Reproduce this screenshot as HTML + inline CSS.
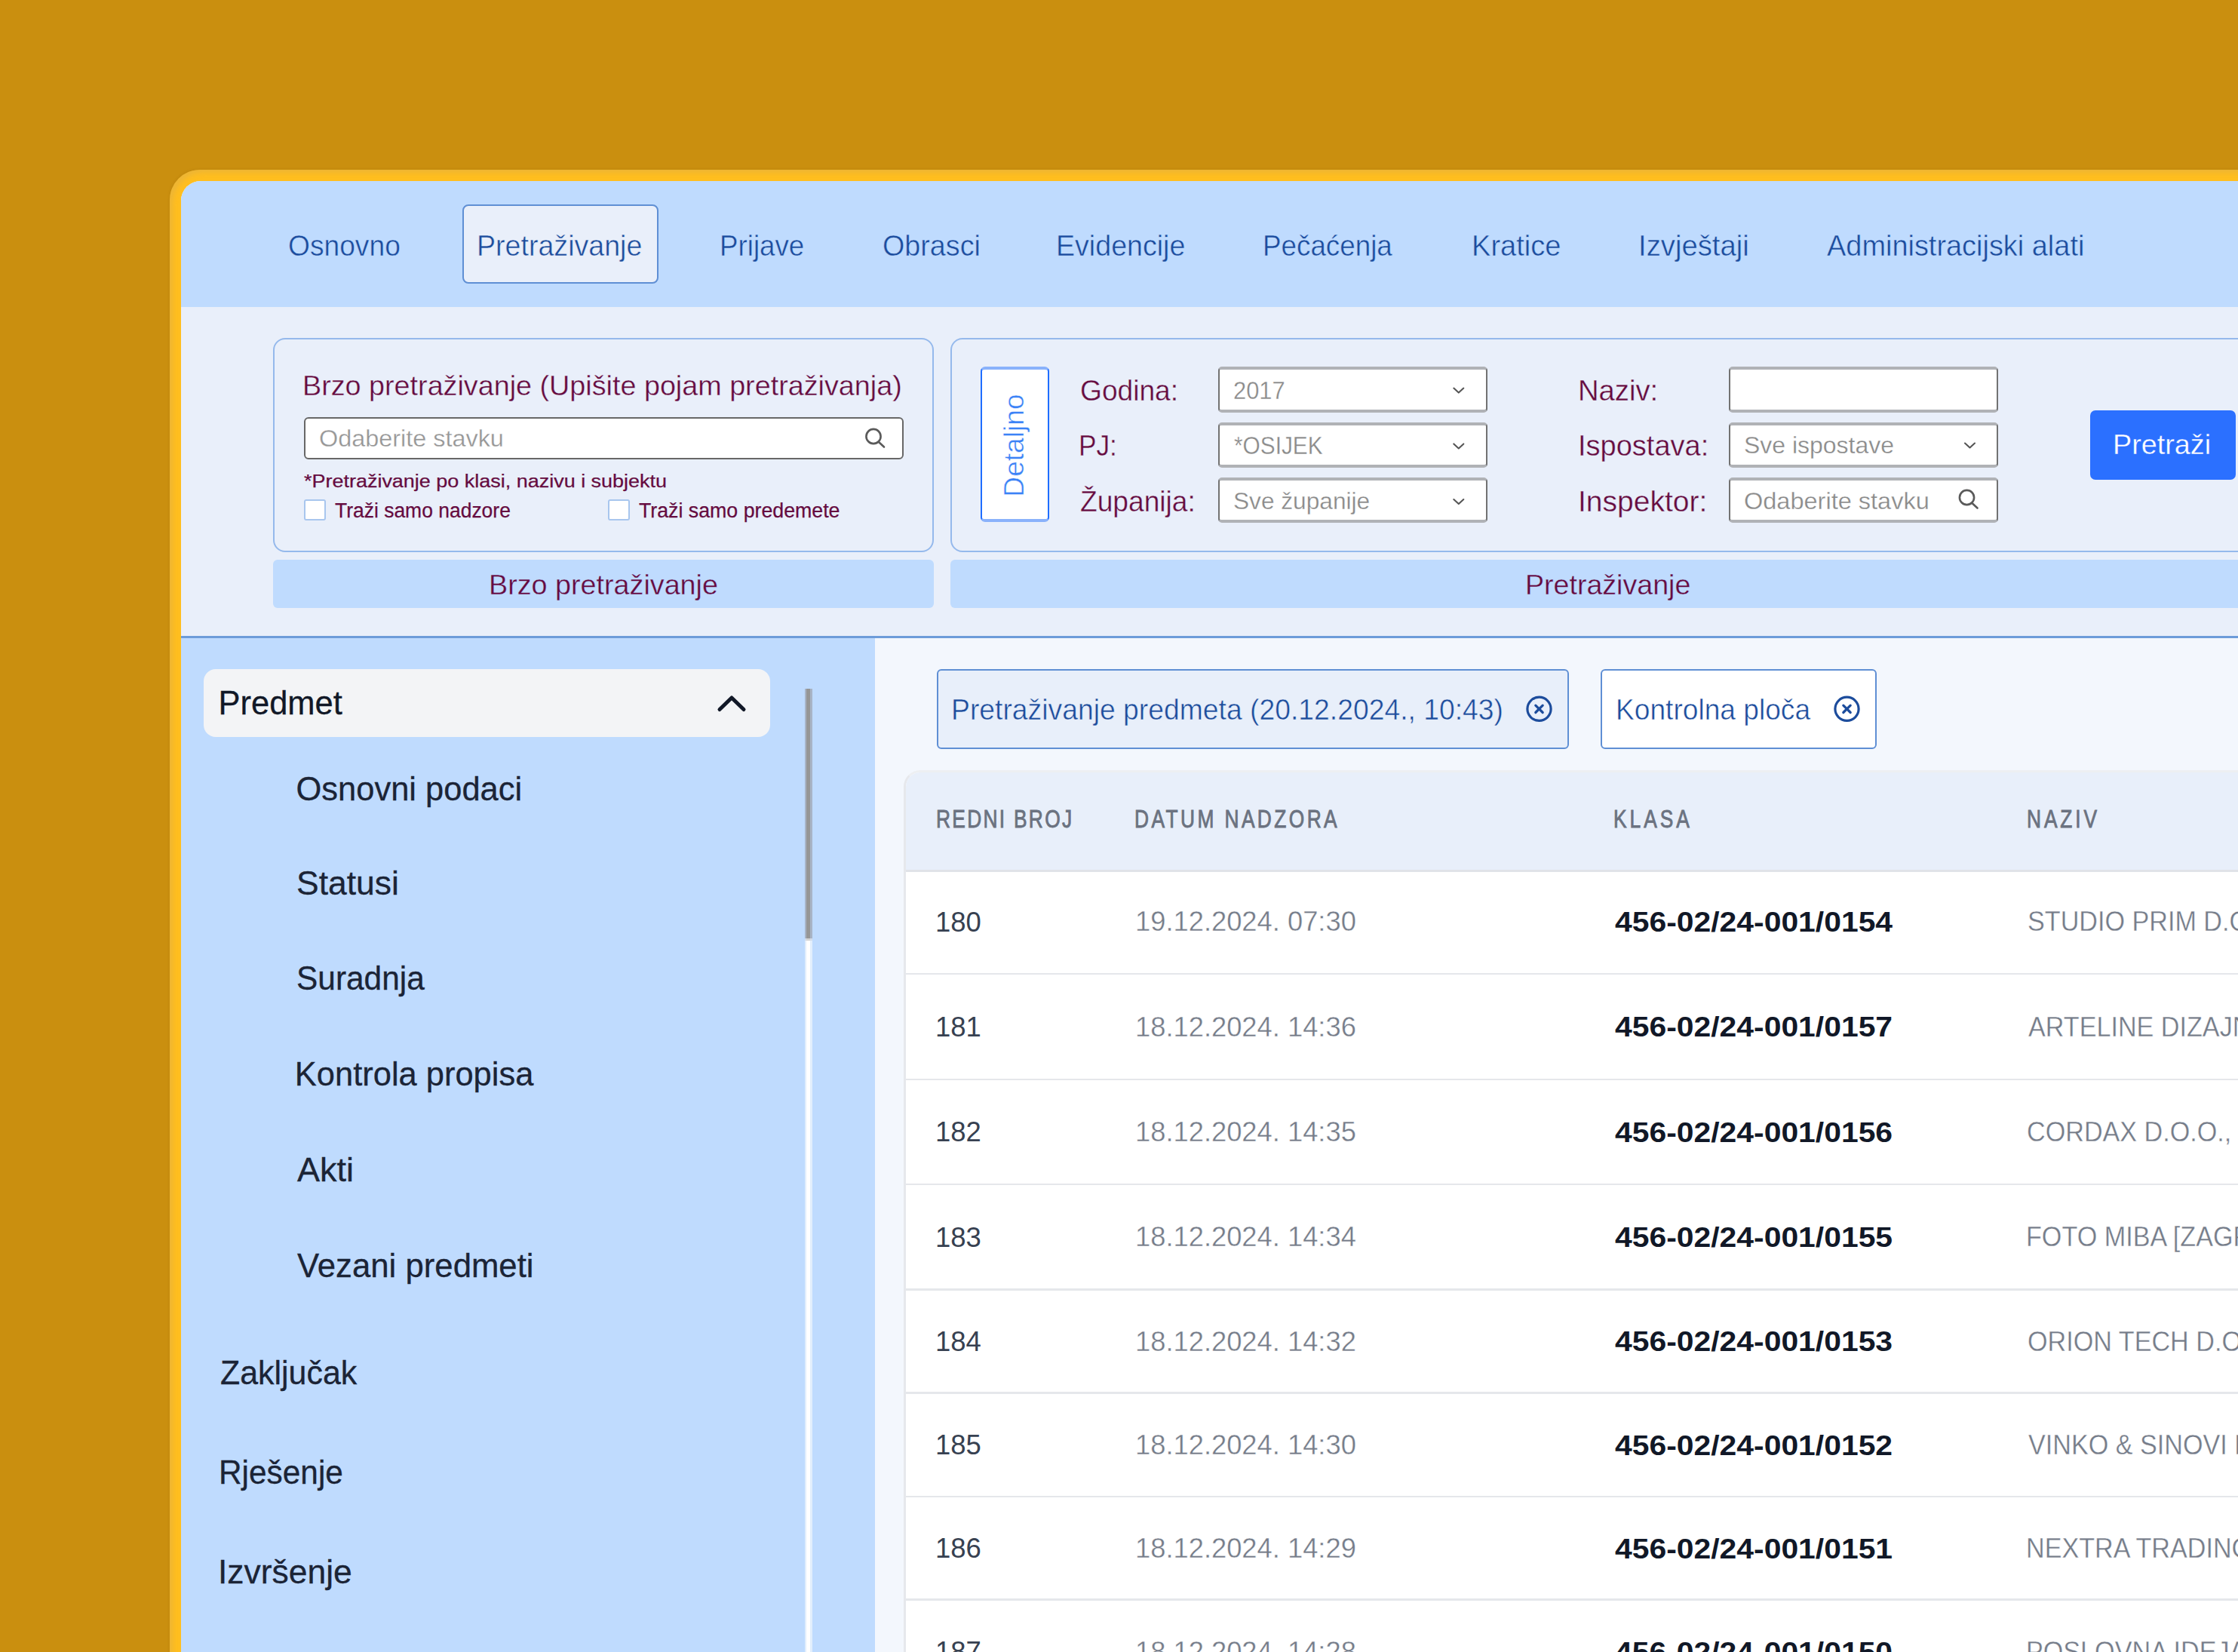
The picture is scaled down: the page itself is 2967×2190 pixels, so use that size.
<!DOCTYPE html>
<html><head><meta charset="utf-8"><style>
html,body{margin:0;padding:0;}
body{width:2967px;height:2190px;overflow:hidden;position:relative;background:#ca8f0f;font-family:"Liberation Sans",sans-serif;}
.a{position:absolute;box-sizing:border-box;}
.t{position:absolute;white-space:nowrap;font-family:"Liberation Sans",sans-serif;}
svg{position:absolute;overflow:visible;}

</style></head><body>
<div class="a" style="left:225px;top:225px;width:2800px;height:2000px;background:#ffbe1f;border-top-left-radius:40px;box-shadow:-1px -1px 3px rgba(120,80,0,0.10), inset 5px 5px 6px -1px rgba(215,170,80,0.45);"></div>
<div class="a" style="left:240px;top:240px;width:2760px;height:1990px;border-top-left-radius:26px;overflow:hidden;background:#f3f7fd;">
  <div class="a" style="left:0;top:0;width:2760px;height:167px;background:#bfdbfe;"></div>
  <div class="a" style="left:0;top:167px;width:2760px;height:437px;background:#e9effa;"></div>
  <div class="a" style="left:0;top:603px;width:2760px;height:3px;background:#6d9cd9;"></div>
  <div class="a" style="left:0;top:606px;width:920px;height:1400px;background:#bfdbfe;"></div>
</div>
<!-- active nav tab -->
<div class="a" style="left:613px;top:271px;width:260px;height:105px;border:2.4px solid #5f8fd4;border-radius:8px;background:#e9effa;"></div>
<!-- panel 1 -->
<div class="a" style="left:362px;top:448px;width:876px;height:284px;border:2.4px solid #95b9ec;border-radius:16px;"></div>
<div class="a" style="left:403px;top:553px;width:795px;height:56px;border:2.5px solid #676767;border-radius:6px;background:#fff;"></div>
<svg style="left:0;top:0" width="1" height="1"><g fill="none" stroke="#5a5a5a" stroke-width="2.6" stroke-linecap="round"><circle cx="1158" cy="578.5" r="9.6"/><line x1="1165" y1="586" x2="1172" y2="592.5"/></g></svg>
<div class="a" style="left:403px;top:662px;width:29px;height:28px;border:2px solid #a8c6ee;border-radius:3px;background:#fff;"></div>
<div class="a" style="left:806px;top:662px;width:29px;height:28px;border:2px solid #a8c6ee;border-radius:3px;background:#fff;"></div>
<div class="a" style="left:362px;top:742px;width:876px;height:63.5px;background:#bfdbfe;border-radius:6px;"></div>
<!-- panel 2 -->
<div class="a" style="left:1259.5px;top:448px;width:1800px;height:284px;border:2.4px solid #95b9ec;border-radius:16px;"></div>
<div class="a" style="left:1260px;top:742px;width:1800px;height:63.5px;background:#bfdbfe;border-radius:6px;"></div>
<div class="a" style="left:1300px;top:486px;width:91px;height:206px;border:2.5px solid #1f6dff;border-top:4.5px solid #8ab2fb;border-bottom:4.5px solid #8ab2fb;border-radius:6px;background:#fff;"></div>
<!-- selects -->

<div class="a" style="left:1614.5px;top:486px;width:357px;height:61px;border:2.5px solid #727272;border-top:4.6px solid #b0b2b6;border-bottom:4.6px solid #b0b2b6;border-radius:5px;background:#fff;"></div>
<div class="a" style="left:2292px;top:486px;width:357px;height:61px;border:2.5px solid #727272;border-top:4.6px solid #b0b2b6;border-bottom:4.6px solid #b0b2b6;border-radius:5px;background:#fff;"></div>
<div class="a" style="left:1614.5px;top:560px;width:357px;height:60px;border:2.5px solid #727272;border-top:4.6px solid #b0b2b6;border-bottom:4.6px solid #b0b2b6;border-radius:5px;background:#fff;"></div>
<div class="a" style="left:2292px;top:560px;width:357px;height:60px;border:2.5px solid #727272;border-top:4.6px solid #b0b2b6;border-bottom:4.6px solid #b0b2b6;border-radius:5px;background:#fff;"></div>
<div class="a" style="left:1614.5px;top:633.4px;width:357px;height:60.0px;border:2.5px solid #727272;border-top:4.6px solid #b0b2b6;border-bottom:4.6px solid #b0b2b6;border-radius:5px;background:#fff;"></div>
<div class="a" style="left:2292px;top:633.4px;width:357px;height:60.0px;border:2.5px solid #727272;border-top:4.6px solid #b0b2b6;border-bottom:4.6px solid #b0b2b6;border-radius:5px;background:#fff;"></div>
<svg style="left:0;top:0" width="1" height="1"><g fill="none" stroke="#555" stroke-width="2.1" stroke-linecap="round" stroke-linejoin="round">
<polyline points="1927.3,514.6 1933.8,520.6 1940.3,514.6"/>
<polyline points="1927.3,588.4 1933.8,594.4 1940.3,588.4"/>
<polyline points="1927.3,662 1933.8,668 1940.3,662"/>
<polyline points="2605,587.5 2611.5,593.5 2618,587.5"/>
</g>
<g fill="none" stroke="#5a5a5a" stroke-width="2.6" stroke-linecap="round"><circle cx="2607.5" cy="659.5" r="9.6"/><line x1="2614.5" y1="667" x2="2621.5" y2="673.5"/></g>
</svg>
<div class="a" style="left:2771px;top:544px;width:193px;height:92px;background:#2b70ff;border-radius:7px;"></div>
<!-- sidebar -->
<div class="a" style="left:270px;top:887px;width:751px;height:90px;background:#f3f4f6;border-radius:16px;"></div>
<svg style="left:0;top:0" width="1" height="1"><polyline points="954,940.5 970,925 986,940.5" fill="none" stroke="#111827" stroke-width="5" stroke-linecap="round" stroke-linejoin="round"/></svg>
<div class="a" style="left:1067px;top:912.5px;width:9.5px;height:331.5px;background:linear-gradient(to right,#a8b4c6 0,#a8b4c6 2px,#969696 2px,#969696 7px,#a8b4c6 7px);"></div>
<div class="a" style="left:1067px;top:1244px;width:9.5px;height:3px;background:linear-gradient(to right,#d2dcea 0,#d2dcea 2px,#d4d4d4 2px,#d4d4d4 7px,#d2dcea 7px);"></div>
<div class="a" style="left:1067px;top:1247px;width:9.5px;height:950px;background:linear-gradient(to right,#e2eefc 0,#e2eefc 2px,#ffffff 2px,#ffffff 7px,#e2eefc 7px);"></div>
<!-- tabs -->
<div class="a" style="left:1242px;top:887px;width:838px;height:106px;border:2.4px solid #5f8fd4;border-radius:6px;background:#e8effa;"></div>
<div class="a" style="left:2122px;top:887px;width:366px;height:106px;border:2.4px solid #5f8fd4;border-radius:6px;background:#ffffff;"></div>
<svg style="left:0;top:0" width="1" height="1"><g fill="none" stroke="#1c4c9c" stroke-width="3.2" stroke-linecap="round">
<circle cx="2040.5" cy="939.8" r="15.6"/><line x1="2035.8" y1="935.1" x2="2045.2" y2="944.5"/><line x1="2045.2" y1="935.1" x2="2035.8" y2="944.5"/>
<circle cx="2448.5" cy="939.8" r="15.6"/><line x1="2443.8" y1="935.1" x2="2453.2" y2="944.5"/><line x1="2453.2" y1="935.1" x2="2443.8" y2="944.5"/>
</g></svg>
<!-- table card -->
<div class="a" style="left:1197.5px;top:1021px;width:1900px;height:1300px;border:3px solid #e6e8ec;border-top-color:#edeff2;border-radius:22px;background:#fff;overflow:hidden;">
  <div class="a" style="left:0;top:0;width:1900px;height:129px;background:#e8effa;"></div>
  <div class="a" style="left:0;top:129px;width:1900px;height:2.5px;background:#e0e3e8;"></div>
</div>
<div class="a" style="left:1201px;top:1290.0px;width:1800px;height:2.4px;background:#e5e7eb;"></div>
<div class="a" style="left:1201px;top:1429.8px;width:1800px;height:2.4px;background:#e5e7eb;"></div>
<div class="a" style="left:1201px;top:1568.8px;width:1800px;height:2.4px;background:#e5e7eb;"></div>
<div class="a" style="left:1201px;top:1708.3px;width:1800px;height:2.4px;background:#e5e7eb;"></div>
<div class="a" style="left:1201px;top:1845.4px;width:1800px;height:2.4px;background:#e5e7eb;"></div>
<div class="a" style="left:1201px;top:1982.8px;width:1800px;height:2.4px;background:#e5e7eb;"></div>
<div class="a" style="left:1201px;top:2119.3px;width:1800px;height:2.4px;background:#e5e7eb;"></div>

<div class="t" style="left:381.51px;top:305.80px;font-size:39.57px;line-height:39.57px;color:#1c4c9c;transform-origin:0 33.50px;transform:scaleX(0.9398);-webkit-text-stroke:0.5px #bfdbfe;">Osnovno</div>
<div class="t" style="left:631.99px;top:305.80px;font-size:39.57px;line-height:39.57px;color:#1c4c9c;transform-origin:0 33.50px;transform:scaleX(0.9500);-webkit-text-stroke:0.5px #e9effa;">Pretraživanje</div>
<div class="t" style="left:954.06px;top:305.80px;font-size:39.57px;line-height:39.57px;color:#1c4c9c;transform-origin:0 33.50px;transform:scaleX(0.9283);-webkit-text-stroke:0.5px #bfdbfe;">Prijave</div>
<div class="t" style="left:1170.49px;top:305.80px;font-size:39.57px;line-height:39.57px;color:#1c4c9c;transform-origin:0 33.50px;transform:scaleX(0.9526);-webkit-text-stroke:0.5px #bfdbfe;">Obrasci</div>
<div class="t" style="left:1399.99px;top:305.80px;font-size:39.57px;line-height:39.57px;color:#1c4c9c;transform-origin:0 33.50px;transform:scaleX(0.9502);-webkit-text-stroke:0.5px #bfdbfe;">Evidencije</div>
<div class="t" style="left:1674.06px;top:305.80px;font-size:39.57px;line-height:39.57px;color:#1c4c9c;transform-origin:0 33.50px;transform:scaleX(0.9298);-webkit-text-stroke:0.5px #bfdbfe;">Pečaćenja</div>
<div class="t" style="left:1950.96px;top:305.80px;font-size:39.57px;line-height:39.57px;color:#1c4c9c;transform-origin:0 33.50px;transform:scaleX(0.9617);-webkit-text-stroke:0.5px #bfdbfe;">Kratice</div>
<div class="t" style="left:2171.55px;top:305.80px;font-size:39.57px;line-height:39.57px;color:#1c4c9c;transform-origin:0 33.50px;transform:scaleX(0.9678);-webkit-text-stroke:0.5px #bfdbfe;">Izvještaji</div>
<div class="t" style="left:2422.00px;top:305.80px;font-size:39.57px;line-height:39.57px;color:#1c4c9c;transform-origin:0 33.50px;transform:scaleX(0.9584);-webkit-text-stroke:0.5px #bfdbfe;">Administracijski alati</div>
<div class="t" style="left:400.98px;top:493.63px;font-size:36.81px;line-height:36.81px;color:#650b3f;transform-origin:0 31.17px;transform:scaleX(1.0253);-webkit-text-stroke:0.35px #e9effa;">Brzo pretraživanje (Upišite pojam pretraživanja)</div>
<div class="t" style="left:423.20px;top:567.16px;font-size:30.87px;line-height:30.87px;color:#969696;transform-origin:0 26.14px;transform:scaleX(1.0496);-webkit-text-stroke:0.3px #ffffff;">Odaberite stavku</div>
<div class="t" style="left:403.33px;top:626.18px;font-size:23.77px;line-height:23.77px;color:#650b3f;transform-origin:0 20.12px;transform:scaleX(1.1344);-webkit-text-stroke:0.25px #650b3f;">*Pretraživanje po klasi, nazivu i subjektu</div>
<div class="t" style="left:443.97px;top:664.10px;font-size:26.81px;line-height:26.81px;color:#650b3f;transform-origin:0 22.70px;transform:scaleX(0.9875);-webkit-text-stroke:0.25px #650b3f;">Traži samo nadzore</div>
<div class="t" style="left:847.17px;top:664.10px;font-size:26.81px;line-height:26.81px;color:#650b3f;transform-origin:0 22.70px;transform:scaleX(0.9977);-webkit-text-stroke:0.25px #650b3f;">Traži samo predemete</div>
<div class="t" style="left:647.68px;top:757.51px;font-size:36.96px;line-height:36.96px;color:#650b3f;transform-origin:0 31.29px;transform:scaleX(1.0206);-webkit-text-stroke:0.35px #bfdbfe;">Brzo pretraživanje</div>
<div class="t" style="left:1431.64px;top:499.21px;font-size:38.84px;line-height:38.84px;color:#650b3f;transform-origin:0 32.89px;transform:scaleX(0.9565);-webkit-text-stroke:0.35px #e9effa;">Godina:</div>
<div class="t" style="left:1430.18px;top:571.91px;font-size:38.84px;line-height:38.84px;color:#650b3f;transform-origin:0 32.89px;transform:scaleX(0.9073);-webkit-text-stroke:0.35px #e9effa;">PJ:</div>
<div class="t" style="left:1432.39px;top:646.11px;font-size:38.84px;line-height:38.84px;color:#650b3f;transform-origin:0 32.89px;transform:scaleX(0.9568);-webkit-text-stroke:0.35px #e9effa;">Županija:</div>
<div class="t" style="left:1635.46px;top:501.57px;font-size:32.75px;line-height:32.75px;color:#8a8a8a;transform-origin:0 27.73px;transform:scaleX(0.9424);-webkit-text-stroke:0.3px #ffffff;">2017</div>
<div class="t" style="left:1636.30px;top:575.44px;font-size:32.32px;line-height:32.32px;color:#8a8a8a;transform-origin:0 27.36px;transform:scaleX(0.9222);-webkit-text-stroke:0.3px #ffffff;">*OSIJEK</div>
<div class="t" style="left:1635.33px;top:649.30px;font-size:31.88px;line-height:31.88px;color:#8a8a8a;transform-origin:0 27.00px;transform:scaleX(0.9925);-webkit-text-stroke:0.3px #ffffff;">Sve županije</div>
<div class="t" style="left:2092.44px;top:498.91px;font-size:38.84px;line-height:38.84px;color:#650b3f;transform-origin:0 32.89px;transform:scaleX(0.9843);-webkit-text-stroke:0.35px #e9effa;">Naziv:</div>
<div class="t" style="left:2092.08px;top:571.91px;font-size:38.84px;line-height:38.84px;color:#650b3f;transform-origin:0 32.89px;transform:scaleX(0.9786);-webkit-text-stroke:0.35px #e9effa;">Ispostava:</div>
<div class="t" style="left:2091.99px;top:645.91px;font-size:38.84px;line-height:38.84px;color:#650b3f;transform-origin:0 32.89px;transform:scaleX(1.0052);-webkit-text-stroke:0.35px #e9effa;">Inspektor:</div>
<div class="t" style="left:2312.02px;top:575.45px;font-size:31.59px;line-height:31.59px;color:#8a8a8a;transform-origin:0 26.75px;transform:scaleX(1.0119);-webkit-text-stroke:0.3px #ffffff;">Sve ispostave</div>
<div class="t" style="left:2312.00px;top:649.05px;font-size:31.59px;line-height:31.59px;color:#8a8a8a;transform-origin:0 26.75px;transform:scaleX(1.0294);-webkit-text-stroke:0.3px #ffffff;">Odaberite stavku</div>
<div class="t" style="left:2800.98px;top:572.25px;font-size:36.67px;line-height:36.67px;color:#ffffff;transform-origin:0 31.05px;transform:scaleX(1.0296);-webkit-text-stroke:0.3px #2b70ff;">Pretraži</div>
<div class="t" style="left:2021.99px;top:757.55px;font-size:36.67px;line-height:36.67px;color:#650b3f;transform-origin:0 31.05px;transform:scaleX(1.0251);-webkit-text-stroke:0.35px #bfdbfe;">Pretraživanje</div>
<div class="t" style="left:1358.00px;top:628.09px;font-size:36.23px;line-height:36.23px;color:#3b82f6;transform-origin:0 30.68px;transform:rotate(-90deg) scaleX(1.0254);-webkit-text-stroke:0.5px #ffffff;">Detaljno</div>
<div class="t" style="left:289.52px;top:911.49px;font-size:43.48px;line-height:43.48px;color:#111827;-webkit-text-stroke:0.3px #111827;">Predmet</div>
<div class="t" style="left:392.56px;top:1025.19px;font-size:43.48px;line-height:43.48px;color:#1b2436;-webkit-text-stroke:0.3px #1b2436;">Osnovni podaci</div>
<div class="t" style="left:392.52px;top:1149.59px;font-size:43.48px;line-height:43.48px;color:#1b2436;transform-origin:0 36.81px;transform:scaleX(1.0220);-webkit-text-stroke:0.3px #1b2436;">Statusi</div>
<div class="t" style="left:392.60px;top:1276.39px;font-size:43.48px;line-height:43.48px;color:#1b2436;transform-origin:0 36.81px;transform:scaleX(0.9758);-webkit-text-stroke:0.3px #1b2436;">Suradnja</div>
<div class="t" style="left:390.82px;top:1403.29px;font-size:43.48px;line-height:43.48px;color:#1b2436;-webkit-text-stroke:0.3px #1b2436;">Kontrola propisa</div>
<div class="t" style="left:394.30px;top:1529.79px;font-size:43.48px;line-height:43.48px;color:#1b2436;transform-origin:0 36.81px;transform:scaleX(1.0362);-webkit-text-stroke:0.3px #1b2436;">Akti</div>
<div class="t" style="left:394.30px;top:1656.59px;font-size:43.48px;line-height:43.48px;color:#1b2436;transform-origin:0 36.81px;transform:scaleX(1.0059);-webkit-text-stroke:0.3px #1b2436;">Vezani predmeti</div>
<div class="t" style="left:291.71px;top:1798.79px;font-size:43.48px;line-height:43.48px;color:#1b2436;transform-origin:0 36.81px;transform:scaleX(0.9871);-webkit-text-stroke:0.3px #1b2436;">Zaključak</div>
<div class="t" style="left:289.61px;top:1930.79px;font-size:43.48px;line-height:43.48px;color:#1b2436;transform-origin:0 36.81px;transform:scaleX(0.9748);-webkit-text-stroke:0.3px #1b2436;">Rješenje</div>
<div class="t" style="left:289.00px;top:2062.79px;font-size:43.48px;line-height:43.48px;color:#1b2436;transform-origin:0 36.81px;transform:scaleX(1.0220);-webkit-text-stroke:0.3px #1b2436;">Izvršenje</div>
<div class="t" style="left:1261.22px;top:922.24px;font-size:38.70px;line-height:38.70px;color:#1c4c9c;transform-origin:0 32.76px;transform:scaleX(0.9642);-webkit-text-stroke:0.5px #e8effa;">Pretraživanje predmeta (20.12.2024., 10:43)</div>
<div class="t" style="left:2142.03px;top:922.21px;font-size:38.84px;line-height:38.84px;color:#1c4c9c;transform-origin:0 32.89px;transform:scaleX(0.9563);-webkit-text-stroke:0.5px #ffffff;">Kontrolna ploča</div>
<div class="t" style="left:1241.39px;top:1070.14px;font-size:32.90px;line-height:32.90px;color:#6b7280;letter-spacing:2.883px;transform-origin:0 27.86px;transform:scaleX(0.8000);-webkit-text-stroke:0.9px #6b7280;">REDNI BROJ</div>
<div class="t" style="left:1503.89px;top:1070.14px;font-size:32.90px;line-height:32.90px;color:#6b7280;letter-spacing:4.284px;transform-origin:0 27.86px;transform:scaleX(0.8000);-webkit-text-stroke:0.9px #6b7280;">DATUM NADZORA</div>
<div class="t" style="left:2138.59px;top:1070.14px;font-size:32.90px;line-height:32.90px;color:#6b7280;letter-spacing:4.991px;transform-origin:0 27.86px;transform:scaleX(0.8000);-webkit-text-stroke:0.9px #6b7280;">KLASA</div>
<div class="t" style="left:2686.89px;top:1070.14px;font-size:32.90px;line-height:32.90px;color:#6b7280;letter-spacing:4.851px;transform-origin:0 27.86px;transform:scaleX(0.8000);-webkit-text-stroke:0.9px #6b7280;">NAZIV</div>
<div class="t" style="left:1240.45px;top:1203.50px;font-size:37.68px;line-height:37.68px;color:#374151;transform-origin:0 31.90px;transform:scaleX(0.9682);">180</div>
<div class="t" style="left:1505.46px;top:1204.11px;font-size:36.96px;line-height:36.96px;color:#757c89;transform-origin:0 31.29px;transform:scaleX(0.9828);-webkit-text-stroke:0.35px #ffffff;">19.12.2024. 07:30</div>
<div class="t" style="left:2140.59px;top:1203.95px;font-size:37.14px;line-height:37.14px;color:#111827;font-weight:700;transform-origin:0 31.45px;transform:scaleX(1.1007);">456-02/24-001/0154</div>
<div class="t" style="left:2687.63px;top:1204.23px;font-size:36.81px;line-height:36.81px;color:#757c89;transform-origin:0 31.17px;transform:scaleX(0.9280);-webkit-text-stroke:0.35px #ffffff;">STUDIO PRIM D.O.O.</div>
<div class="t" style="left:1240.45px;top:1343.00px;font-size:37.68px;line-height:37.68px;color:#374151;transform-origin:0 31.90px;transform:scaleX(0.9682);">181</div>
<div class="t" style="left:1505.46px;top:1343.61px;font-size:36.96px;line-height:36.96px;color:#757c89;transform-origin:0 31.29px;transform:scaleX(0.9828);-webkit-text-stroke:0.35px #ffffff;">18.12.2024. 14:36</div>
<div class="t" style="left:2140.59px;top:1343.45px;font-size:37.14px;line-height:37.14px;color:#111827;font-weight:700;transform-origin:0 31.45px;transform:scaleX(1.1007);">456-02/24-001/0157</div>
<div class="t" style="left:2689.00px;top:1343.73px;font-size:36.81px;line-height:36.81px;color:#757c89;transform-origin:0 31.17px;transform:scaleX(0.9280);-webkit-text-stroke:0.35px #ffffff;">ARTELINE DIZAJN</div>
<div class="t" style="left:1240.45px;top:1482.40px;font-size:37.68px;line-height:37.68px;color:#374151;transform-origin:0 31.90px;transform:scaleX(0.9682);">182</div>
<div class="t" style="left:1505.46px;top:1483.01px;font-size:36.96px;line-height:36.96px;color:#757c89;transform-origin:0 31.29px;transform:scaleX(0.9828);-webkit-text-stroke:0.35px #ffffff;">18.12.2024. 14:35</div>
<div class="t" style="left:2140.59px;top:1482.85px;font-size:37.14px;line-height:37.14px;color:#111827;font-weight:700;transform-origin:0 31.45px;transform:scaleX(1.1007);">456-02/24-001/0156</div>
<div class="t" style="left:2687.29px;top:1483.13px;font-size:36.81px;line-height:36.81px;color:#757c89;transform-origin:0 31.17px;transform:scaleX(0.9280);-webkit-text-stroke:0.35px #ffffff;">CORDAX D.O.O., ZAGREB</div>
<div class="t" style="left:1240.45px;top:1621.65px;font-size:37.68px;line-height:37.68px;color:#374151;transform-origin:0 31.90px;transform:scaleX(0.9682);">183</div>
<div class="t" style="left:1505.46px;top:1622.26px;font-size:36.96px;line-height:36.96px;color:#757c89;transform-origin:0 31.29px;transform:scaleX(0.9828);-webkit-text-stroke:0.35px #ffffff;">18.12.2024. 14:34</div>
<div class="t" style="left:2140.59px;top:1622.10px;font-size:37.14px;line-height:37.14px;color:#111827;font-weight:700;transform-origin:0 31.45px;transform:scaleX(1.1007);">456-02/24-001/0155</div>
<div class="t" style="left:2686.27px;top:1622.38px;font-size:36.81px;line-height:36.81px;color:#757c89;transform-origin:0 31.17px;transform:scaleX(0.9280);-webkit-text-stroke:0.35px #ffffff;">FOTO MIBA [ZAGREB]</div>
<div class="t" style="left:1240.45px;top:1759.95px;font-size:37.68px;line-height:37.68px;color:#374151;transform-origin:0 31.90px;transform:scaleX(0.9682);">184</div>
<div class="t" style="left:1505.46px;top:1760.56px;font-size:36.96px;line-height:36.96px;color:#757c89;transform-origin:0 31.29px;transform:scaleX(0.9828);-webkit-text-stroke:0.35px #ffffff;">18.12.2024. 14:32</div>
<div class="t" style="left:2140.59px;top:1760.40px;font-size:37.14px;line-height:37.14px;color:#111827;font-weight:700;transform-origin:0 31.45px;transform:scaleX(1.1007);">456-02/24-001/0153</div>
<div class="t" style="left:2687.63px;top:1760.68px;font-size:36.81px;line-height:36.81px;color:#757c89;transform-origin:0 31.17px;transform:scaleX(0.9280);-webkit-text-stroke:0.35px #ffffff;">ORION TECH D.O.O.</div>
<div class="t" style="left:1240.45px;top:1897.20px;font-size:37.68px;line-height:37.68px;color:#374151;transform-origin:0 31.90px;transform:scaleX(0.9682);">185</div>
<div class="t" style="left:1505.46px;top:1897.81px;font-size:36.96px;line-height:36.96px;color:#757c89;transform-origin:0 31.29px;transform:scaleX(0.9828);-webkit-text-stroke:0.35px #ffffff;">18.12.2024. 14:30</div>
<div class="t" style="left:2140.59px;top:1897.65px;font-size:37.14px;line-height:37.14px;color:#111827;font-weight:700;transform-origin:0 31.45px;transform:scaleX(1.1007);">456-02/24-001/0152</div>
<div class="t" style="left:2689.00px;top:1897.93px;font-size:36.81px;line-height:36.81px;color:#757c89;transform-origin:0 31.17px;transform:scaleX(0.9280);-webkit-text-stroke:0.35px #ffffff;">VINKO &amp; SINOVI D.O.O.</div>
<div class="t" style="left:1240.45px;top:2034.15px;font-size:37.68px;line-height:37.68px;color:#374151;transform-origin:0 31.90px;transform:scaleX(0.9682);">186</div>
<div class="t" style="left:1505.46px;top:2034.76px;font-size:36.96px;line-height:36.96px;color:#757c89;transform-origin:0 31.29px;transform:scaleX(0.9828);-webkit-text-stroke:0.35px #ffffff;">18.12.2024. 14:29</div>
<div class="t" style="left:2140.59px;top:2034.60px;font-size:37.14px;line-height:37.14px;color:#111827;font-weight:700;transform-origin:0 31.45px;transform:scaleX(1.1007);">456-02/24-001/0151</div>
<div class="t" style="left:2686.27px;top:2034.88px;font-size:36.81px;line-height:36.81px;color:#757c89;transform-origin:0 31.17px;transform:scaleX(0.9280);-webkit-text-stroke:0.35px #ffffff;">NEXTRA TRADING</div>
<div class="t" style="left:1240.45px;top:2171.15px;font-size:37.68px;line-height:37.68px;color:#374151;transform-origin:0 31.90px;transform:scaleX(0.9682);">187</div>
<div class="t" style="left:1505.46px;top:2171.76px;font-size:36.96px;line-height:36.96px;color:#757c89;transform-origin:0 31.29px;transform:scaleX(0.9828);-webkit-text-stroke:0.35px #ffffff;">18.12.2024. 14:28</div>
<div class="t" style="left:2140.59px;top:2171.60px;font-size:37.14px;line-height:37.14px;color:#111827;font-weight:700;transform-origin:0 31.45px;transform:scaleX(1.1007);">456-02/24-001/0150</div>
<div class="t" style="left:2686.27px;top:2171.88px;font-size:36.81px;line-height:36.81px;color:#757c89;transform-origin:0 31.17px;transform:scaleX(0.9280);-webkit-text-stroke:0.35px #ffffff;">POSLOVNA IDEJA</div>
</body></html>
